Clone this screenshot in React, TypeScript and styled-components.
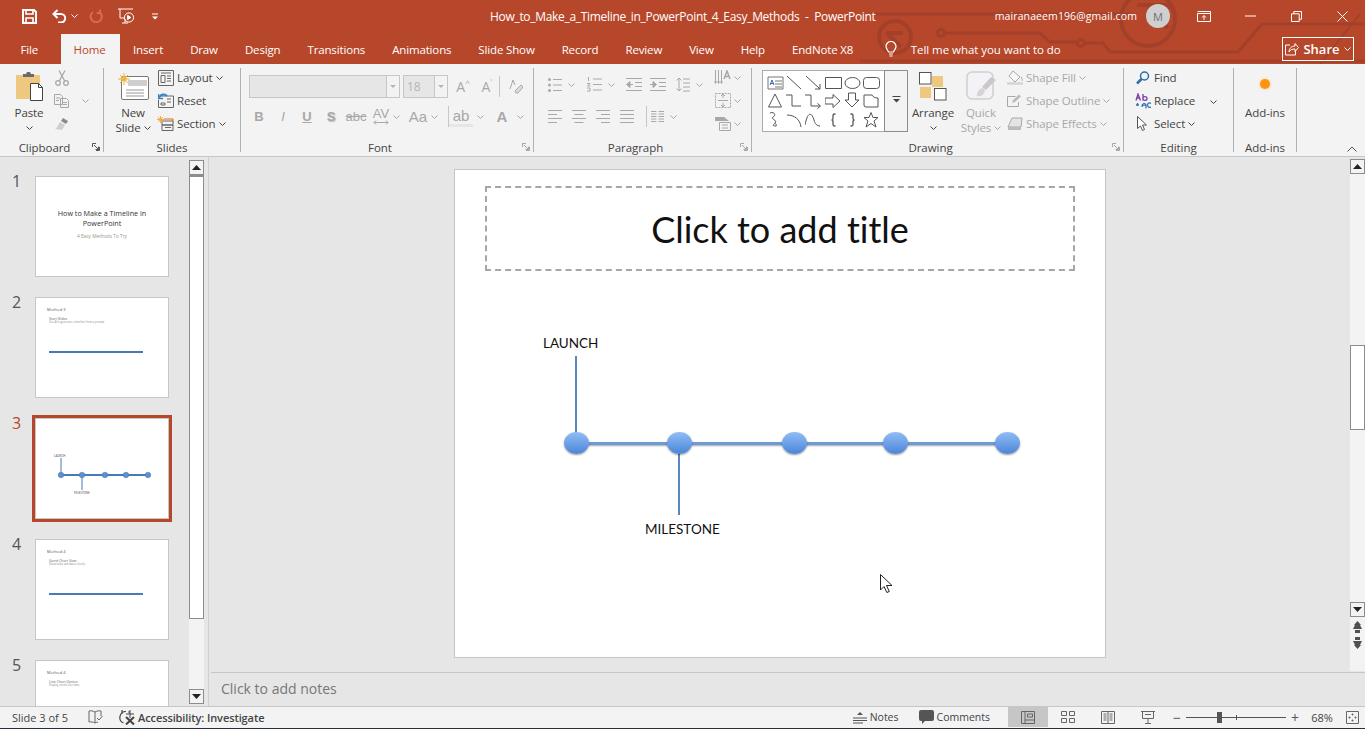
import React from 'react';
import styled, { createGlobalStyle } from 'styled-components';

const RED = '#b7472a';
const LINE = '#a3402a';
const PANEL = '#e6e6e6';
const RIBBON = '#f3f3f3';
const INK = '#444';
const OFF = '#a8a8a8';
const UI_FONT = '"Open Sans", "Noto Sans", sans-serif';
const SLIDE_FONT = 'Lato, "Open Sans", sans-serif';

const GlobalStyle = createGlobalStyle`
    html, body { margin: 0; padding: 0; background: ${PANEL}; overflow: hidden; }
    body { font-family: ${UI_FONT}; font-size: 12px; color: ${INK}; }
    * { box-sizing: border-box; }
`;

interface SvgProps {
    readonly w: number;
    readonly h: number;
    readonly c?: string;
    readonly sw?: number;
    readonly children: React.ReactNode;
}

const Svg = ({ w, h, c = INK, sw = 1, children }: SvgProps) => (
    <svg width={w} height={h} viewBox={`0 0 ${w} ${h}`} fill="none" stroke={c} strokeWidth={sw} style={{ display: 'block', flex: 'none' }}>
        {children}
    </svg>
);

const Chevron = ({ c = INK }: { readonly c?: string }) => (
    <Svg w={7} h={4} c={c}><path d="M.5.5 3.5 3.5 6.5.5" /></Svg>
);

// ---- drawn icons ----
const SaveIcon = () => (
    <Svg w={15} h={15} c="#fff" sw={2}>
        <path d="M1 1h11l2 2v11H1z" />
        <path d="M4 1v4h7V1M4 14V9h7v5" strokeWidth={1.6} />
    </Svg>
);
const UndoIcon = () => (
    <Svg w={15} h={14} c="#fff" sw={2}><path d="M5.5 1 1.500 5l4 4M2 5h7a4.200 4.200 0 0 1 0 8.400H6" /></Svg>
);
const RedoIcon = () => (
    <Svg w={14} h={14} c="#dc6a4c" sw={2}><path d="M4 3a5.600 5.600 0 1 0 7 .4M11 .6V4H7.600" /></Svg>
);
const PresentIcon = () => (
    <Svg w={17} h={16} c="#fff">
        <path d="M0 1h15M2 1v9h5M4 15h6M7 11v4" />
        <circle cx="11" cy="9.5" r="4.600" />
        <path d="M9.600 7.400l3.200 2.100-3.200 2.100z" fill="#fff" />
    </Svg>
);
const CustomizeIcon = () => (
    <Svg w={6} h={7} c="#fff"><path d="M0 1h6" /><path d="M0 3.500h6L3 6.500z" fill="#fff" stroke="none" /></Svg>
);
const DisplayIcon = () => (
    <Svg w={14} h={11} c="#fff"><path d="M.5 2.500h13v8H.5zM.5.5h13v2M7 9V4.600M5 6.500l2-2 2 2" /></Svg>
);
const MinIcon = () => <Svg w={11} h={2} c="#fff"><path d="M0 1h11" /></Svg>;
const RestoreIcon = () => (
    <Svg w={11} h={11} c="#fff"><path d="M.5 2.800h7.700v7.700H.5zM2.800 2.800V.5h7.700v7.700H8.200" /></Svg>
);
const CloseIcon = () => <Svg w={11} h={11} c="#fff"><path d="M.5.5l10 10M10.500.5l-10 10" /></Svg>;
const ShareIcon = () => (
    <Svg w={14} h={14} c="#fff"><path d="M5 3H.5v10h10V9M4 10c0-4 3-6 6-6V1.500l3.500 4-3.500 4V7c-3 0-5 1-6 3z" /></Svg>
);
const BulbIcon = () => (
    <Svg w={12} h={16} c="#fff" sw={1.2}>
        <path d="M3.500 11C3 9 1 8 1 5.500a5 5 0 0 1 10 0C11 8 9 9 8.500 11zM4 13h4M4.500 15h3" />
    </Svg>
);
const PasteIcon = () => (
    <Svg w={29} h={31} c="#666">
        <path d="M1 4h24v24H1z" fill="#edc87e" stroke="none" />
        <path d="M8 3h3l1-2h3l1 2h3v3H8z" fill="#6b6b6b" stroke="none" />
        <path d="M15.500 12.500h8l4 4v13h-12z" fill="#fff" stroke="#444" />
        <path d="M23.500 12.500v4h4" stroke="#444" />
    </Svg>
);
const ScissorsIcon = () => (
    <Svg w={14} h={16} c={OFF} sw={1.3}>
        <circle cx="3" cy="13" r="2.300" /><circle cx="11" cy="13" r="2.300" />
        <path d="M4.300 11 10 .5M9.700 11 4 .5" />
    </Svg>
);
const CopyIcon = () => (
    <Svg w={15} h={14} c={OFF}><path d="M.5.5h6l2 2v8h-8zM6.500 4.500h6l2 2v7h-8zM2 4h4M2 6.500h3M8.500 8.500h4.500M8.500 10.500h4.500" /></Svg>
);
const PainterIcon = () => (
    <Svg w={16} h={14} c={OFF}>
        <path d="M9 1l5 3-2 3-5-3z" fill="#8b8b8b" stroke="none" />
        <path d="M6 5l5 3-3 5-7-1c2-1 3-4 5-7z" fill="#cfcfcf" stroke="none" />
    </Svg>
);
const LauncherIcon = ({ c = '#666' }: { readonly c?: string }) => (
    <Svg w={8} h={8} c={c}><path d="M.5 4V.5H4M7.500 4v3.500H4M2 2l4.500 4.500M6.500 3.500v3h-3" /></Svg>
);
const NewSlideIcon = () => (
    <Svg w={31} h={27} c="#777">
        <rect x="3.500" y="3.500" width="27" height="23" rx="1.500" fill="#fff" />
        <path d="M10 7h19v6H10z" fill="#cfcfcf" stroke="none" />
        <path d="M8 17h18M8 20h18M8 23h18" stroke="#999" />
        <circle cx="6" cy="6" r="2.800" fill="#f5c66e" stroke="none" />
        <path d="M6 0v12M0 6h12M2 2l8 8M10 2l-8 8" stroke="#f0b040" />
    </Svg>
);
const LayoutIcon = () => (
    <Svg w={16} h={16} c="#666"><path d="M.5.5h15v15H.5zM3 3h10M3 5.500h4v7H3zM9 6h4M9 8.500h4M9 11h4" /></Svg>
);
const ResetIcon = () => (
    <Svg w={16} h={15} c="#666">
        <path d="M3 3h12.500v11.500H.5V7M3 10h4v2H3zM9 6h4M9 9h4" />
        <path d="M1 4.500C3 1 7 .5 9 3" stroke="#3f7fc4" strokeWidth={2} />
        <path d="M.5 1v4.500H5" stroke="#3f7fc4" strokeWidth={1.5} />
    </Svg>
);
const SectionIcon = () => (
    <Svg w={17} h={15} c="#666">
        <path d="M5 5h11v4H5zM5 9h11v5.500H5zM8 11.500h6" />
        <path d="M3.500 0v7M0 3.500h7M1 1l5 5M6 1 1 6" stroke="#f0b040" />
        <path d="M7 3h9v3" stroke="#d9691e" />
    </Svg>
);
const ClearFormatIcon = () => (
    <Svg w={15} h={15} c={OFF}>
        <path d="M2 10 5 1l2 5" />
        <path d="M7 12 13 6l2 2-5 6H8z" fill="#ddd" />
    </Svg>
);
const SpacingArrow = () => (
    <Svg w={16} h={5} c={OFF}><path d="M1 2.500h14M3 .5l-2 2 2 2M13 .5l2 2-2 2" /></Svg>
);
const BulletsIcon = () => (
    <Svg w={14} h={14} c={OFF}>
        <circle cx="1.500" cy="1.500" r="1.500" fill={OFF} stroke="none" /><circle cx="1.500" cy="7" r="1.500" fill={OFF} stroke="none" /><circle cx="1.500" cy="12.500" r="1.500" fill={OFF} stroke="none" />
        <path d="M5 1.500h9M5 7h9M5 12.500h9" />
    </Svg>
);
const NumberingIcon = () => (
    <Svg w={15} h={15} c={OFF}>
        <path d="M1.500 0v4M0 6.500h3L.5 9h3M0 11h3v3H0" />
        <path d="M6 2h9M6 7.500h9M6 13h9" />
    </Svg>
);
const IndentIcon = ({ flip }: { readonly flip?: boolean }) => (
    <Svg w={16} h={13} c={OFF}>
        <path d="M0 .5h16M9 4.500h7M9 8.500h7M0 12.500h16" />
        <path d={flip ? 'M0 6.500h5M3 3.500 6.500 6.500 3 9.500z' : 'M7 6.500H2M4 3.500.5 6.500 4 9.500z'} fill={OFF} />
    </Svg>
);
const LineSpacingIcon = () => (
    <Svg w={14} h={15} c={OFF}><path d="M3 1v13M.5 3.500 3 1l2.500 2.500M.5 11.500 3 14l2.500-2.500M7 2h7M7 6h7M7 10h7M7 14h7" /></Svg>
);
const AlignIcon = ({ kind }: { readonly kind: 'l' | 'c' | 'r' | 'j' }) => {
    const short = { l: 'M0 4.500h9M0 12.500h9', c: 'M2.500 4.500h9M2.500 12.500h9', r: 'M5 4.500h9M5 12.500h9', j: 'M0 4.500h14M0 12.500h14' }[kind];
    return <Svg w={14} h={13} c={OFF}><path d="M0 .5h14M0 8.500h14" /><path d={short} /></Svg>;
};
const ColumnsIcon = () => (
    <Svg w={13} h={11} c={OFF}><path d="M0 .5h5.500M7.500.5H13M0 5.500h5.500M7.500 5.500H13M0 10.500h5.500M7.500 10.500H13M0 3h5.500M7.500 3H13M0 8h5.500M7.500 8H13" /></Svg>
);
const TextDirIcon = () => (
    <Svg w={17} h={16} c={OFF}>
        <path d="M1.500 0v13M4.500 0v13M.5 11.500l1 2 1-2M3.500 11.500l1 2 1-2M7.500 0v13M6.500 11.500l1 2 1-2" />
        <path d="M10 9l3-8 3 8M11 6.500h4" strokeWidth={1.5} />
    </Svg>
);
const AlignTextIcon = () => (
    <Svg w={16} h={15} c={OFF}>
        <path d="M.5.5h15v14H.5z" strokeDasharray="2 1" />
        <path d="M3 7.500h10M8 1v4M6 3l2-2 2 2M8 14v-4M6 12l2 2 2-2" />
    </Svg>
);
const SmartArtIcon = () => (
    <Svg w={16} h={15} c={OFF}>
        <path d="M0 1h9l5 4H0z" fill={OFF} stroke="none" />
        <path d="M4.500 6.500h11v8h-11z" fill="#f3f3f3" />
        <path d="M7 9h6M7 12h6" />
    </Svg>
);
const ArrangeIcon = () => (
    <Svg w={28} h={29} c="#555">
        <rect x="13" y="4" width="11" height="11" fill="#edc87e" stroke="none" />
        <rect x="1" y="15" width="11" height="11" fill="#edc87e" stroke="none" />
        <rect x=".5" y=".5" width="11.500" height="11.500" fill="#fff" />
        <rect x="15.500" y="16.500" width="11.500" height="11.500" fill="#fff" />
    </Svg>
);
const QuickStylesIcon = () => (
    <Svg w={31} h={30} c="#cfcfcf" sw={1.5}>
        <rect x="1" y="1" width="26" height="27" rx="5" fill="#f5f2f7" />
        <path d="M30 9 20 19l-4-3 9-10z" fill="#c9c9c9" stroke="none" />
        <path d="M17 17c-3 0-5 2-6 6-.5 1.500 0 2.500 1.500 2.500 3 0 6-3 6.500-6z" fill="#d5d5d5" stroke="none" />
    </Svg>
);
const ShapeFillIcon = () => (
    <Svg w={16} h={15} c={OFF}>
        <path d="M6 1l7 6-5 5-6-6z" fill="#f7f7f7" /><path d="M0 13.500h16" stroke="#d5d5d5" strokeWidth={2.5} />
        <path d="M14 7c1 2 2 3 1 4" />
    </Svg>
);
const ShapeOutlineIcon = () => (
    <Svg w={16} h={13} c={OFF}><path d="M.5 2.500h8M.5 2.500v10h11V8" /><path d="M5 9l1-3 6-5.500 2 2L8 8z" fill="#bbb" stroke="none" /></Svg>
);
const ShapeEffectsIcon = () => (
    <Svg w={16} h={14} c={OFF}>
        <path d="M5 1h10l-1 9H1z" fill="#e4e4e4" /><path d="M1 10h13v3H1z" fill="#bbb" stroke="none" />
    </Svg>
);
const FindIcon = () => (
    <Svg w={14} h={14} c="#2e6db0" sw={1.5}><circle cx="8.500" cy="5" r="4" /><path d="M5.500 8 1 12.500" strokeWidth={2.5} /></Svg>
);
const ReplaceIcon = () => (
    <Svg w={16} h={16} c="#2e6db0">
        <path d="M1 7.500 3 1l2.500 6.500M1.800 5h3" stroke="#7b3fa8" strokeWidth={1.3} />
        <path d="M8 1v6.500M8 5.500c0-2.500 4-2.500 4 0s-4 2.500-4 0z" stroke="#7b3fa8" strokeWidth={1.3} />
        <path d="M1 12h3M2.500 10v2" strokeWidth={1.3} />
        <path d="M7 13c0-3 4-3 4-1v3.500M7 14c0-2 4-2 4-2M16 10.500c-3-1.500-4 .5-3 3 .4 1 2 1 3 .5" strokeWidth={1.2} />
    </Svg>
);
const SelectIcon = () => (
    <Svg w={11} h={15} c="#555"><path d="M.5.500v12l3-2.500 2 4.500 2-1-2-4.500h4z" fill="#fff" /></Svg>
);
const CollapseIcon = () => <Svg w={10} h={6} c="#555"><path d="M.5 5.500 5 1l4.500 4.500" /></Svg>;
const ProofIcon = () => (
    <Svg w={15} h={14} c="#666"><path d="M1 1c2-.5 4 0 6 1v11c-2-1-4-1.500-6-1zM7 2c2-1 4-1.500 6-1v5M7 13c1-.5 2-.8 3-1M9 8l2 2 3.500-4" /></Svg>
);
const AccessIcon = () => (
    <Svg w={17} h={16} c="#444" sw={1.2}>
        <path d="M7 2.500A6 6 0 0 0 4.500 14M3 1v4M9 3h2" />
        <path d="M7 8l8 7.500M15 8l-8 7.500" strokeWidth={2} />
        <path d="M11 1v8M7 5h8" strokeWidth={1} />
    </Svg>
);
const NotesIcon = () => (
    <Svg w={14} h={13} c="#555"><path d="M0 7h14M0 9.500h14M0 12h10" /><path d="M7 1l3 3H4z" fill="#555" stroke="none" /></Svg>
);
const CommentIcon = () => (
    <Svg w={15} h={14} c="#555">
        <path d="M2 0h11a2 2 0 0 1 2 2v7a2 2 0 0 1-2 2H6l-3 3v-3H2a2 2 0 0 1-2-2V2a2 2 0 0 1 2-2z" fill="#555" stroke="none" />
    </Svg>
);
const NormalViewIcon = () => (
    <Svg w={14} h={13} c="#666"><path d="M.5.5h13v12H.5zM4 .5v12M4 9h9.500M6.500 3h5v3h-5z" /></Svg>
);
const SorterIcon = () => (
    <Svg w={14} h={12} c="#666"><path d="M.5.5h5v4h-5zM8.500.5h5v4h-5zM.5 7.500h5v4h-5zM8.500 7.500h5v4h-5z" /></Svg>
);
const ReadingIcon = () => (
    <Svg w={14} h={13} c="#666"><path d="M.5.5h13v12H.5zM7 .5v12M2.500 3h3M2.500 5h3M2.500 7h3M2.500 9h3M8.500 3h3M8.500 5h3M8.500 7h3M8.500 9h3" /></Svg>
);
const ShowIcon = () => (
    <Svg w={14} h={13} c="#666"><path d="M0 .5h14M1.500 .5v7h11v-7M7 7.500v5M4 12.500h6M4 3.500h6" /></Svg>
);
const FitIcon = () => (
    <Svg w={13} h={13} c="#666"><path d="M.5.5h12v12H.5zM6.500 2.500v2M5.500 3.500h2M6.500 8.500v2M5.500 9.500h2M2.500 6.500h2M3.500 5.500v2M8.500 6.500h2M9.500 5.500v2" /></Svg>
);
const PrevNextIcon = ({ down }: { readonly down?: boolean }) => (
    <svg width={9} height={12} viewBox="0 0 9 12" fill="#505050" style={{ display: 'block', transform: down ? 'scaleY(-1)' : undefined }}>
        <path d="M4.500 0 8 4H7l2 4H0l2-4H1zM2 9h5v3H2z" />
    </svg>
);
const Pointer = () => (
    <svg width={13} height={20} viewBox="0 0 13 20" fill="#fff" stroke="#222" style={{ display: 'block' }}>
        <path d="M.5.500v15.500l3.500-3.500 2.800 6 2.500-1-2.800-6H12z" />
    </svg>
);

// ---- shape gallery ----
const SHAPES: ReadonlyArray<React.ReactNode> = [
    <g key="box"><path d="M1 3h15v12H1z" /><path d="M8 7h7M8 10h7M8 13h7" /><path d="M3 11l2-5 2 5M3.800 9.500h2.400" stroke="#2e6db0" /></g>,
    <path key="line" d="M1 2l14 13" />,
    <path key="arrow" d="M1 2l14 13M15 10v5h-5" />,
    <path key="rect" d="M.5 3.500h16v11H.5z" />,
    <ellipse key="ell" cx="8.500" cy="9" rx="7.500" ry="5.500" />,
    <rect key="rr" x=".5" y="3.500" width="16" height="11" rx="3" />,
    <path key="tri" d="M8 2l6.500 13H1.500z" />,
    <path key="el" d="M0 3h6v11h9" />,
    <path key="ela" d="M0 3h6v11h9M12.500 11.500l3 2.500-3 2.500" />,
    <path key="ra" d="M0 6h8V2.500l7 6.500-7 6.500V12H0z" />,
    <path key="da" d="M4.500 1h7v7h3.500L8 15 1 8h3.500z" />,
    <path key="snip" d="M1 3h8c1 2 3 3 6 3v9H3a2 2 0 0 1-2-2z" />,
    <path key="free" d="M3 2c5-2 6 3 3 4-3 2 5 3 2 6-2 2-3 3 1 3 1 0 0-3-1-2" />,
    <path key="arc" d="M1 4c7 0 13 4 14 12" />,
    <path key="curve" d="M0 14c3-15 7-12 9-5 1 4 3 6 6 6" />,
    <path key="ob" d="M10.500 3H9.500Q8 3 8 4.500V7.500Q8 9 6.500 9 8 9 8 10.500V13.500Q8 15 9.500 15H10.500" strokeWidth={1.3} />,
    <path key="cb" d="M6.500 3H7.500Q9 3 9 4.500V7.500Q9 9 10.500 9 9 9 9 10.500V13.500Q9 15 7.500 15H6.500" strokeWidth={1.3} />,
    <path key="star" d="M8 1.500l2 5h5l-4 3.500 2 6-5-3.500-5 3.500 2-6-4-3.500h5z" />
];

// ---- page ----
const TABS = ['Insert', 'Draw', 'Design', 'Transitions', 'Animations', 'Slide Show', 'Record', 'Review', 'View', 'Help', 'EndNote X8'];

const CircuitArt = () => (
    <Circuit width={1365} height={64} viewBox="0 0 1365 64" fill="none" stroke={LINE} strokeWidth={3}>
        <path d="M870 14h262" />
        <circle cx="895" cy="37" r="16" strokeWidth={4} />
        <path d="M886 33h17M887 33l14 14" strokeWidth={4} />
        <circle cx="941" cy="33" r="3.500" />
        <path d="M945 33h95l10 9h27" />
        <circle cx="1081" cy="43" r="3.500" />
        <path d="M1085 43h18l7 9h128l24-28h103" />
        <path d="M860 61h505" />
        <path d="M1320 64l40-50" strokeWidth={2} />
        <circle cx="1148" cy="19" r="27" strokeWidth={4} />
        <path d="M1137 5h33v4M1148 8l20 20" strokeWidth={4} />
    </Circuit>
);

interface ToolProps {
    readonly icon: React.ReactNode;
    readonly label: string;
    readonly off?: boolean;
    readonly chevron?: boolean;
}

const Tool = ({ icon, label, off, chevron }: ToolProps) => (
    <ToolRow $off={off}>
        <ToolIcon>{icon}</ToolIcon>
        <span>{label}</span>
        {chevron && <Chevron c={off ? OFF : INK} />}
    </ToolRow>
);

interface GroupProps {
    readonly w: number;
    readonly label: string;
    readonly launcher?: boolean;
    readonly children: React.ReactNode;
}

const RibbonGroup = ({ w, label, launcher, children }: GroupProps) => (
    <Group $w={w}>
        <GroupBody>{children}</GroupBody>
        <GroupLabel $launcher={launcher}>
            {label}
            {launcher && <LauncherSpot><LauncherIcon c={label === 'Clipboard' ? '#555' : OFF} /></LauncherSpot>}
        </GroupLabel>
    </Group>
);

const Ribbon = () => (
    <RibbonBar>
        <RibbonGroup w={103} label="Clipboard" launcher>
            <LargeButton $w={42} $ml={8}>
                <LargeIcon><PasteIcon /></LargeIcon>
                <LargeText>Paste</LargeText>
                <ChevronLine><Chevron /></ChevronLine>
            </LargeButton>
            <ToolColumn $ml={3}>
                <ToolRow><ToolIcon><ScissorsIcon /></ToolIcon></ToolRow>
                <ToolRow><ToolIcon><CopyIcon /></ToolIcon><CopyChevron><Chevron c={OFF} /></CopyChevron></ToolRow>
                <ToolRow><ToolIcon><PainterIcon /></ToolIcon></ToolRow>
            </ToolColumn>
        </RibbonGroup>
        <GroupRule />
        <RibbonGroup w={136} label="Slides">
            <LargeButton $w={42} $ml={8}>
                <LargeIcon><NewSlideIcon /></LargeIcon>
                <LargeText>New</LargeText>
                <LargeText>Slide <Chevron /></LargeText>
            </LargeButton>
            <ToolColumn $ml={3}>
                <Tool icon={<LayoutIcon />} label="Layout" chevron />
                <Tool icon={<ResetIcon />} label="Reset" />
                <Tool icon={<SectionIcon />} label="Section" chevron />
            </ToolColumn>
        </RibbonGroup>
        <GroupRule />
        <RibbonGroup w={292} label="Font" launcher>
            <FontBody>
                <FontRow>
                    <Combo $w={151}><ComboArrow /></Combo>
                    <Combo $w={45}>18<ComboArrow /></Combo>
                    <GrowGlyph>A<sup>^</sup></GrowGlyph>
                    <GrowGlyph>A<sup>˅</sup></GrowGlyph>
                    <SmallRule $ml={0} $mr={0} />
                    <ClearSpot><ClearFormatIcon /></ClearSpot>
                </FontRow>
                <FontRow>
                    <FormatGlyph $w={24} $ml={-2} $bold>B</FormatGlyph>
                    <FormatGlyph $w={24} $italic>I</FormatGlyph>
                    <FormatGlyph $w={24} $under $bold>U</FormatGlyph>
                    <FormatGlyph $w={24} $bold $shadow>S</FormatGlyph>
                    <FormatGlyph $w={26} $strike>abc</FormatGlyph>
                    <SpacingGlyph>AV<SpacingArrow /></SpacingGlyph>
                    <Chevron c={OFF} />
                    <FormatGlyph $w={26} $ml={5} $big>Aa</FormatGlyph>
                    <Chevron c={OFF} />
                    <SmallRule $ml={10} $mr={0} />
                    <FormatGlyph $w={24} $big $mark $mr={4}>ab</FormatGlyph>
                    <Chevron c={OFF} />
                    <FormatGlyph $w={24} $ml={6} $mr={3} $big $bold>A</FormatGlyph>
                    <Chevron c={OFF} />
                </FontRow>
            </FontBody>
        </RibbonGroup>
        <GroupRule />
        <RibbonGroup w={217} label="Paragraph" launcher>
            <ParaBody>
                <FontRow>
                    <ParaItem $w={39}><BulletsIcon /><Chevron c={OFF} /></ParaItem>
                    <ParaItem $w={39}><NumberingIcon /><Chevron c={OFF} /></ParaItem>
                    <ParaItem $w={24}><IndentIcon /></ParaItem>
                    <ParaItem $w={26}><IndentIcon flip /></ParaItem>
                    <ParaItem $w={30}><LineSpacingIcon /><Chevron c={OFF} /></ParaItem>
                </FontRow>
                <FontRow>
                    <ParaItem $w={24}><AlignIcon kind="l" /></ParaItem>
                    <ParaItem $w={24}><AlignIcon kind="c" /></ParaItem>
                    <ParaItem $w={24}><AlignIcon kind="r" /></ParaItem>
                    <ParaItem $w={22}><AlignIcon kind="j" /></ParaItem>
                    <SmallRule $ml={4} $mr={4} />
                    <ParaItem $w={36}><ColumnsIcon /><Chevron c={OFF} /></ParaItem>
                </FontRow>
            </ParaBody>
            <ToolColumn $ml={10}>
                <ToolRow><ToolIcon><TextDirIcon /></ToolIcon><Chevron c={OFF} /></ToolRow>
                <ToolRow><ToolIcon><AlignTextIcon /></ToolIcon><Chevron c={OFF} /></ToolRow>
                <ToolRow><ToolIcon><SmartArtIcon /></ToolIcon><Chevron c={OFF} /></ToolRow>
            </ToolColumn>
        </RibbonGroup>
        <GroupRule />
        <RibbonGroup w={371} label="Drawing" launcher>
            <Gallery>
                {SHAPES.map((shape, i) => <Svg key={i} w={17} h={17} c={i === 0 ? '#777' : '#555'}>{shape}</Svg>)}
            </Gallery>
            <GalleryMore><Svg w={9} h={7} c="#444"><path d="M.5.500h8" /><path d="M1 3h7L4.500 6.500z" fill="#444" stroke="none" /></Svg></GalleryMore>
            <LargeButton $w={48} $ml={1}>
                <LargeIcon><ArrangeIcon /></LargeIcon>
                <LargeText>Arrange</LargeText>
                <ChevronLine><Chevron /></ChevronLine>
            </LargeButton>
            <LargeButton $w={46} $ml={1} $off>
                <LargeIcon><QuickStylesIcon /></LargeIcon>
                <LargeText>Quick</LargeText>
                <LargeText>Styles <Chevron c={OFF} /></LargeText>
            </LargeButton>
            <ToolColumn $ml={2}>
                <Tool icon={<ShapeFillIcon />} label="Shape Fill" off chevron />
                <Tool icon={<ShapeOutlineIcon />} label="Shape Outline" off chevron />
                <Tool icon={<ShapeEffectsIcon />} label="Shape Effects" off chevron />
            </ToolColumn>
        </RibbonGroup>
        <GroupRule />
        <RibbonGroup w={109} label="Editing">
            <ToolColumn $ml={10}>
                <Tool icon={<FindIcon />} label="Find" />
                <Tool icon={<ReplaceIcon />} label="Replace" />
                <Tool icon={<SelectIcon />} label="Select" chevron />
            </ToolColumn>
            <ReplaceChevron><Chevron /></ReplaceChevron>
        </RibbonGroup>
        <GroupRule />
        <RibbonGroup w={62} label="Add-ins">
            <LargeButton $w={62} $ml={0}>
                <LargeIcon><AddInDot /></LargeIcon>
                <LargeText>Add-ins</LargeText>
            </LargeButton>
        </RibbonGroup>
        <GroupRule />
        <CollapseSpot><CollapseIcon /></CollapseSpot>
    </RibbonBar>
);

interface ThumbLine {
    readonly heading: string;
    readonly title: string;
    readonly text: string;
}

const ListSlide = ({ heading, title, text }: ThumbLine) => (
    <ThumbContent>
        <ThumbHeading>{heading}</ThumbHeading>
        <ThumbTitle>{title}</ThumbTitle>
        <ThumbText>{text}</ThumbText>
        <ThumbBar />
    </ThumbContent>
);

const MiniTimeline = () => (
    <svg width={132} height={99} viewBox="0 0 132 99" style={{ display: 'block' }}>
        <text x="18" y="37.5" fontSize="2.8" fill="#555" fontFamily="Lato">LAUNCH</text>
        <text x="38" y="75" fontSize="2.8" fill="#555" fontFamily="Lato">MILESTONE</text>
        <path d="M25 39v17M46 56v15" stroke="#4a7ab5" strokeWidth={1} />
        <path d="M25 56h87" stroke="#4a7ab5" strokeWidth={2} />
        {[25, 46, 69, 90, 112].map(x => <circle key={x} cx={x} cy={56} r={2.8} fill="#5b8fd6" stroke="#4a7ab5" strokeWidth={.5} />)}
    </svg>
);

const Thumbnails = () => (
    <ThumbPanel>
        <ThumbRow>
            <ThumbNumber>1</ThumbNumber>
            <ThumbCard>
                <CoverSlide>
                    <CoverTitle>How to Make a Timeline in PowerPoint</CoverTitle>
                    <CoverSub>4 Easy Methods To Try</CoverSub>
                </CoverSlide>
            </ThumbCard>
        </ThumbRow>
        <ThumbRow>
            <ThumbNumber>2</ThumbNumber>
            <ThumbCard><ListSlide heading="Method 3" title="Start Slides" text="Use AI to generate a timeline from a prompt" /></ThumbCard>
        </ThumbRow>
        <ThumbRow>
            <ThumbNumber $active>3</ThumbNumber>
            <ThumbCard $active><MiniTimeline /></ThumbCard>
        </ThumbRow>
        <ThumbRow>
            <ThumbNumber>4</ThumbNumber>
            <ThumbCard><ListSlide heading="Method 4" title="Gantt Chart View" text="Show tasks and dates clearly" /></ThumbCard>
        </ThumbRow>
        <ThumbRow>
            <ThumbNumber>5</ThumbNumber>
            <ThumbCard><ListSlide heading="Method 4" title="Line Chart Option" text="Display events over time" /></ThumbCard>
        </ThumbRow>
    </ThumbPanel>
);

const ScrollArrow = ({ up }: { readonly up?: boolean }) => (
    <ScrollButton>
        <svg width={9} height={5} viewBox="0 0 9 5" fill="#222" style={{ transform: up ? undefined : 'scaleY(-1)' }}>
            <path d="M4.500 0 9 5H0z" />
        </svg>
    </ScrollButton>
);

const NODES = [122, 225, 340, 441, 553];

const SlideCanvas = () => (
    <Slide>
        <TitleBox>Click to add title</TitleBox>
        <SlideLabel $x={89} $y={166}>LAUNCH</SlideLabel>
        <SlideLabel $x={191} $y={352}>MILESTONE</SlideLabel>
        <Stem $x={121} $top={187} $h={78} />
        <Stem $x={224} $top={285} $h={61} />
        <Spine />
        {NODES.map(x => <Node key={x} $x={x} />)}
        <PointerSpot><Pointer /></PointerSpot>
    </Slide>
);

const StatusBar = () => (
    <Status>
        <SlideCount>Slide 3 of 5</SlideCount>
        <ProofSpot><ProofIcon /></ProofSpot>
        <AccessSpot><AccessIcon /></AccessSpot>
        <AccessText>Accessibility: Investigate</AccessText>
        <StatusRight>
            <StatusTool $mr={20}><NotesIcon />Notes</StatusTool>
            <StatusTool $mr={18}><CommentIcon />Comments</StatusTool>
            <ViewButton $active><NormalViewIcon /></ViewButton>
            <ViewButton><SorterIcon /></ViewButton>
            <ViewButton><ReadingIcon /></ViewButton>
            <ViewButton><ShowIcon /></ViewButton>
            <ZoomSign>−</ZoomSign>
            <ZoomTrack><ZoomTick /><ZoomThumb /></ZoomTrack>
            <ZoomSign>+</ZoomSign>
            <ZoomValue>68%</ZoomValue>
            <FitIcon />
        </StatusRight>
    </Status>
);

const App = () => (
    <Page>
        <GlobalStyle />
        <Header>
            <CircuitArt />
            <TitleRow>
                <QuickAccess>
                    <QuickItem $ml={0}><SaveIcon /></QuickItem>
                    <QuickItem $ml={15}><UndoIcon /></QuickItem>
                    <QuickItem $ml={4}><Chevron c="#fff" /></QuickItem>
                    <QuickItem $ml={11}><RedoIcon /></QuickItem>
                    <QuickItem $ml={15}><PresentIcon /></QuickItem>
                    <QuickItem $ml={17}><CustomizeIcon /></QuickItem>
                </QuickAccess>
                <DocTitle>How_to_Make_a_Timeline_in_PowerPoint_4_Easy_Methods&nbsp; - &nbsp;PowerPoint</DocTitle>
                <Account>mairanaeem196@gmail.com</Account>
                <Avatar>M</Avatar>
                <WindowButton $ml={11}><DisplayIcon /></WindowButton>
                <WindowButton $ml={0}><MinIcon /></WindowButton>
                <WindowButton $ml={0}><RestoreIcon /></WindowButton>
                <WindowButton $ml={0}><CloseIcon /></WindowButton>
            </TitleRow>
            <TabRow>
                <FileTab>File</FileTab>
                <HomeTab>Home</HomeTab>
                {TABS.map(tab => <Tab key={tab}>{tab}</Tab>)}
                <TellMe><BulbIcon />Tell me what you want to do</TellMe>
                <ShareButton><ShareIcon />Share<Chevron c="#fff" /></ShareButton>
            </TabRow>
        </Header>
        <Ribbon />
        <Main>
            <Thumbnails />
            <LeftScroll>
                <ScrollArrow up />
                <LeftThumb />
                <ScrollArrow />
            </LeftScroll>
            <Editor>
                <EditorTop>
                    <Canvas><SlideCanvas /></Canvas>
                    <RightScroll>
                        <ScrollArrow up />
                        <RightThumb />
                        <ScrollArrow />
                        <SlideNav><PrevNextIcon /><PrevNextIcon down /></SlideNav>
                    </RightScroll>
                </EditorTop>
                <NotesBar>Click to add notes</NotesBar>
            </Editor>
        </Main>
        <StatusBar />
    </Page>
);

const Page = styled.div`
    width: 1365px;
    height: 729px;
    display: flex;
    flex-direction: column;
    overflow: hidden;
`;

const Header = styled.header`
    position: relative;
    height: 64px;
    background: ${RED};
    color: #fff;
    flex: none;
`;

const Circuit = styled.svg`
    position: absolute;
    left: 0;
    top: 0;
`;

const TitleRow = styled.div`
    position: relative;
    height: 32px;
    display: flex;
    align-items: center;
`;

const QuickAccess = styled.div`
    width: 490px;
    padding-left: 22px;
    display: flex;
    align-items: center;
    flex: none;
`;

const QuickItem = styled.div<{ $ml: number }>`
    margin-left: ${({ $ml }) => $ml}px;
    flex: none;
`;

const DocTitle = styled.div`
    width: 400px;
    white-space: nowrap;
    font-size: 12px;
    letter-spacing: -.31px;
`;

const Account = styled.div`
    margin-left: auto;
    font-size: 10.5px;
    letter-spacing: .1px;
    white-space: nowrap;
`;

const Avatar = styled.div`
    width: 24px;
    height: 24px;
    margin-left: 9px;
    border-radius: 50%;
    background: #cfcfcf;
    color: #6a7280;
    font-size: 11px;
    display: flex;
    align-items: center;
    justify-content: center;
    flex: none;
`;

const WindowButton = styled.div<{ $ml: number }>`
    width: 46px;
    margin-left: ${({ $ml }) => $ml}px;
    display: flex;
    justify-content: center;
    flex: none;
`;

const TabRow = styled.nav`
    position: relative;
    height: 32px;
    display: flex;
    align-items: stretch;
    padding-left: 7px;
    font-size: 11.5px;
`;

const Tab = styled.div`
    padding: 3px 13.5px 0;
    display: flex;
    align-items: center;
    white-space: nowrap;
    letter-spacing: -.15px;
`;

const FileTab = styled(Tab)`
    margin-right: 9px;
`;

const HomeTab = styled(Tab)`
    margin-top: 2px;
    padding: 1px 14px 0 13px;
    background: ${RIBBON};
    color: ${RED};
`;

const TellMe = styled.div`
    margin-left: 18px;
    padding-top: 2px;
    display: flex;
    align-items: center;
    gap: 14px;
    letter-spacing: -.05px;
    white-space: nowrap;
`;

const ShareButton = styled.div`
    position: absolute;
    left: 1282px;
    top: 5px;
    width: 72px;
    height: 24px;
    border: 1px solid #fff;
    display: flex;
    align-items: center;
    justify-content: center;
    gap: 4px;
    font-size: 13px;
    font-weight: 600;
`;

const RibbonBar = styled.div`
    height: 93px;
    padding-top: 3px;
    display: flex;
    background: ${RIBBON};
    border-bottom: 1px solid #c6c6c6;
    font-size: 11.5px;
    flex: none;
`;

const Group = styled.section<{ $w: number }>`
    width: ${({ $w }) => $w}px;
    height: 89px;
    display: flex;
    flex-direction: column;
    flex: none;
`;

const GroupBody = styled.div`
    height: 73px;
    display: flex;
`;

const GroupLabel = styled.div<{ $launcher?: boolean }>`
    position: relative;
    height: 16px;
    line-height: 16px;
    text-align: center;
    padding-right: ${({ $launcher }) => ($launcher ? 14 : 0)}px;
    letter-spacing: -.05px;
`;

const LauncherSpot = styled.span`
    position: absolute;
    right: 3px;
    top: 3px;
`;

const GroupRule = styled.div`
    width: 1px;
    height: 84px;
    margin-top: 1px;
    background: #b1b1b1;
    flex: none;
`;

const LargeButton = styled.div<{ $w: number; $ml: number; $off?: boolean }>`
    width: ${({ $w }) => $w}px;
    margin-left: ${({ $ml }) => $ml}px;
    display: flex;
    flex-direction: column;
    align-items: center;
    color: ${({ $off }) => ($off ? OFF : INK)};
    flex: none;
`;

const LargeIcon = styled.div`
    height: 38px;
    display: flex;
    align-items: center;
    justify-content: center;
`;

const LargeText = styled.div`
    height: 15px;
    display: flex;
    align-items: center;
    gap: 3px;
    white-space: nowrap;
    letter-spacing: -.1px;
`;

const ChevronLine = styled.div`
    height: 15px;
    display: flex;
    align-items: center;
`;

const ToolColumn = styled.div<{ $ml: number }>`
    margin-top: -1px;
    margin-left: ${({ $ml }) => $ml}px;
    flex: none;
`;

const ToolRow = styled.div<{ $off?: boolean }>`
    height: 23px;
    display: flex;
    align-items: center;
    gap: 3px;
    white-space: nowrap;
    letter-spacing: -.1px;
    color: ${({ $off }) => ($off ? OFF : INK)};
`;

const ToolIcon = styled.div`
    width: 17px;
    display: flex;
    justify-content: center;
    flex: none;
`;

const CopyChevron = styled.span`
    margin-left: 9px;
`;

const ReplaceChevron = styled.div`
    margin: 33px 0 0 15px;
`;

const FontBody = styled.div`
    padding: 8px 0 0 8px;
    display: flex;
    flex-direction: column;
    gap: 7px;
`;

const FontRow = styled.div`
    height: 23px;
    display: flex;
    align-items: center;
`;

const Combo = styled.div<{ $w: number }>`
    position: relative;
    width: ${({ $w }) => $w}px;
    height: 23px;
    margin-right: 3px;
    padding-left: 3px;
    line-height: 21px;
    font-size: 12px;
    color: #b5b5b5;
    background: #e6e6e6;
    border: 1px solid #c6c6c6;
`;

const ComboArrow = styled.span`
    position: absolute;
    right: 0;
    top: 0;
    bottom: 0;
    width: 13px;
    background: ${RIBBON};
    border-left: 1px solid #c6c6c6;
    &::after {
        content: '';
        position: absolute;
        left: 3px;
        top: 9px;
        border: 3px solid transparent;
        border-top: 3px solid #b5b5b5;
    }
`;

const GrowGlyph = styled.div`
    width: 24px;
    font-size: 14px;
    color: ${OFF};
    text-align: center;
    white-space: nowrap;
    sup { font-size: 8px; line-height: 0; }
`;

const SmallRule = styled.div<{ $ml: number; $mr: number }>`
    width: 1px;
    height: 21px;
    margin-left: ${({ $ml }) => $ml}px;
    margin-right: ${({ $mr }) => $mr}px;
    background: #c6c6c6;
    flex: none;
`;

const ClearSpot = styled.div`
    margin-left: 8px;
`;

interface GlyphProps {
    readonly $w: number;
    readonly $ml?: number;
    readonly $mr?: number;
    readonly $bold?: boolean;
    readonly $italic?: boolean;
    readonly $under?: boolean;
    readonly $strike?: boolean;
    readonly $shadow?: boolean;
    readonly $big?: boolean;
    readonly $mark?: boolean;
}

const FormatGlyph = styled.div<GlyphProps>`
    width: ${({ $w }) => $w}px;
    margin-left: ${({ $ml = 0 }) => $ml}px;
    margin-right: ${({ $mr = 0 }) => $mr}px;
    text-align: center;
    font-family: "Liberation Sans", sans-serif;
    font-size: ${({ $big }) => ($big ? 15 : 13)}px;
    font-weight: ${({ $bold }) => ($bold ? 700 : 400)};
    font-style: ${({ $italic }) => ($italic ? 'italic' : 'normal')};
    text-decoration: ${({ $under, $strike }) => ($under ? 'underline' : $strike ? 'line-through' : 'none')};
    text-shadow: ${({ $shadow }) => ($shadow ? '1px 1px 1px #bbb' : 'none')};
    border-bottom: ${({ $mark }) => ($mark ? '3px solid #e6e6e6' : 'none')};
    color: ${OFF};
    flex: none;
`;

const SpacingGlyph = styled.div`
    width: 24px;
    display: flex;
    flex-direction: column;
    align-items: center;
    font-family: "Liberation Sans", sans-serif;
    font-size: 13px;
    line-height: 12px;
    color: ${OFF};
    flex: none;
`;

const ParaBody = styled.div`
    width: 170px;
    padding: 6px 0 0 14px;
    display: flex;
    flex-direction: column;
    gap: 9px;
    flex: none;
`;

const ParaItem = styled.div<{ $w: number }>`
    width: ${({ $w }) => $w}px;
    display: flex;
    align-items: center;
    gap: 6px;
    flex: none;
`;

const Gallery = styled.div`
    width: 122px;
    height: 62px;
    margin: 3px 0 0 10px;
    padding: 2px 3px;
    display: grid;
    grid-template-columns: repeat(6, 1fr);
    align-items: center;
    justify-items: center;
    background: #fff;
    border: 1px solid #ababab;
    border-right: none;
    flex: none;
`;

const GalleryMore = styled.div`
    width: 24px;
    height: 62px;
    margin-top: 3px;
    padding-top: 25px;
    display: flex;
    justify-content: center;
    border: 1px solid #8c8c8c;
    flex: none;
`;

const AddInDot = styled.div`
    width: 10px;
    height: 10px;
    margin-bottom: 4px;
    border-radius: 50%;
    background: #ff9412;
    box-shadow: 0 0 3px #ffc27a;
`;

const CollapseSpot = styled.div`
    margin: 79px 0 0 50px;
`;

const Main = styled.main`
    height: 549px;
    display: flex;
    background: ${PANEL};
    flex: none;
`;

const ThumbPanel = styled.div`
    width: 189px;
    padding-top: 19px;
    display: flex;
    flex-direction: column;
    gap: 20px;
    overflow: hidden;
    flex: none;
`;

const ThumbRow = styled.div`
    display: flex;
    flex: none;
`;

const ThumbNumber = styled.div<{ $active?: boolean }>`
    width: 35px;
    margin-top: -4px;
    padding-left: 12px;
    font-size: 16px;
    line-height: 18px;
    color: ${({ $active }) => ($active ? RED : '#555')};
    flex: none;
`;

const ThumbCard = styled.div<{ $active?: boolean }>`
    width: 134px;
    height: 101px;
    background: #fff;
    border: 1px solid #c6c6c6;
    outline: ${({ $active }) => ($active ? `3px solid ${RED}` : 'none')};
    flex: none;
`;

const CoverSlide = styled.div`
    padding: 31px 12px 0;
    text-align: center;
`;

const CoverTitle = styled.div`
    font-size: 7.2px;
    line-height: 10px;
    color: #333;
`;

const CoverSub = styled.div`
    margin-top: 5px;
    font-size: 4.8px;
    color: #8f9a86;
`;

const ThumbContent = styled.div`
    padding: 9px 0 0 11px;
`;

const ThumbHeading = styled.div`
    font-size: 4px;
    line-height: 5px;
    color: #555;
    letter-spacing: .1px;
`;

const ThumbTitle = styled.div`
    margin: 4px 0 0 2px;
    font-size: 3.5px;
    line-height: 5px;
    color: #666;
`;

const ThumbText = styled.div`
    margin-left: 2px;
    font-size: 2.7px;
    line-height: 3px;
    color: #888;
`;

const ThumbBar = styled.div`
    width: 94px;
    height: 2px;
    margin: 27px 0 0 2px;
    background: #4a7ab5;
`;

const ScrollButton = styled.div`
    width: 15px;
    height: 15px;
    background: ${RIBBON};
    border: 1px solid #8c8c8c;
    display: flex;
    align-items: center;
    justify-content: center;
    flex: none;
`;

const LeftScroll = styled.div`
    width: 15px;
    height: 544px;
    margin-top: 3px;
    display: flex;
    flex-direction: column;
    background: ${RIBBON};
    flex: none;
`;

const LeftThumb = styled.div`
    height: 444px;
    margin-bottom: auto;
    background: #fff;
    border: 1px solid #8c8c8c;
    border-top-width: 2px;
`;

const Editor = styled.div`
    flex: 1;
    min-width: 0;
    margin-left: 4px;
    display: flex;
    flex-direction: column;
    border-left: 1px solid #cfcfcf;
`;

const EditorTop = styled.div`
    height: 515px;
    display: flex;
    flex: none;
`;

const Canvas = styled.div`
    flex: 1;
    padding: 12px 0 0 245px;
    display: flex;
`;

const Slide = styled.div`
    position: relative;
    width: 652px;
    height: 489px;
    background: #fff;
    border: 1px solid #c6c6c6;
    flex: none;
`;

const TitleBox = styled.div`
    position: absolute;
    left: 30px;
    top: 16px;
    width: 590px;
    height: 85px;
    border: 2px dashed #a6a6a6;
    display: flex;
    align-items: center;
    justify-content: center;
    font-family: ${SLIDE_FONT};
    font-variant-ligatures: none;
    font-size: 36px;
    color: #111;
`;

const SlideLabel = styled.div<{ $x: number; $y: number }>`
    position: absolute;
    left: ${({ $x }) => $x - 1}px;
    top: ${({ $y }) => $y - 1}px;
    font-family: ${SLIDE_FONT};
    font-size: 13.5px;
    line-height: 16px;
    color: #111;
`;

const Stem = styled.div<{ $x: number; $top: number; $h: number }>`
    position: absolute;
    left: ${({ $x }) => $x - 1}px;
    top: ${({ $top }) => $top - 1}px;
    width: 2px;
    height: ${({ $h }) => $h}px;
    background: #5b87c0;
`;

const Spine = styled.div`
    position: absolute;
    left: 122px;
    top: 272px;
    width: 431px;
    height: 3px;
    background: #6e9ad6;
    box-shadow: 0 1px 2px rgba(0, 0, 0, .35);
`;

const Node = styled.div<{ $x: number }>`
    position: absolute;
    left: ${({ $x }) => $x - 13}px;
    top: 262px;
    width: 25px;
    height: 22px;
    border-radius: 50%;
    background: linear-gradient(#92bdf5, #5f96e2 70%, #4f86d4);
    box-shadow: 0 1px 2px rgba(0, 0, 0, .4);
`;

const PointerSpot = styled.div`
    position: absolute;
    left: 425px;
    top: 404px;
`;

const RightScroll = styled.div`
    width: 15px;
    height: 512px;
    margin-top: 2px;
    display: flex;
    flex-direction: column;
    background: ${RIBBON};
    flex: none;
`;

const RightThumb = styled.div`
    height: 85px;
    margin: 171px 0 auto;
    background: #fff;
    border: 1px solid #8c8c8c;
`;

const SlideNav = styled.div`
    height: 54px;
    padding: 4px 0 0 3px;
    display: flex;
    flex-direction: column;
    gap: 4px;
`;

const NotesBar = styled.div`
    height: 34px;
    margin-left: 2px;
    padding: 0 0 3px 10px;
    display: flex;
    align-items: center;
    font-size: 14px;
    color: #767676;
    border-top: 1px solid #c6c6c6;
    flex: none;
`;

const Status = styled.footer`
    height: 23px;
    padding-bottom: 1px;
    display: flex;
    align-items: stretch;
    background: ${RIBBON};
    border-top: 1px solid #c6c6c6;
    border-bottom: 1px solid #26303a;
    font-size: 11px;
    flex: none;
`;

const SlideCount = styled.div`
    width: 88px;
    padding-left: 12px;
    display: flex;
    align-items: center;
    white-space: nowrap;
`;

const ProofSpot = styled.div`
    width: 31px;
    display: flex;
    align-items: center;
`;

const AccessSpot = styled.div`
    width: 19px;
    display: flex;
    align-items: center;
`;

const AccessText = styled.div`
    display: flex;
    align-items: center;
    font-weight: 600;
    white-space: nowrap;
    letter-spacing: -.1px;
`;

const StatusRight = styled.div`
    margin-left: auto;
    padding-right: 6px;
    display: flex;
    align-items: center;
`;

const StatusTool = styled.div<{ $mr: number }>`
    margin-right: ${({ $mr }) => $mr}px;
    display: flex;
    align-items: center;
    gap: 3px;
    font-size: 10.5px;
    white-space: nowrap;
`;

const ViewButton = styled.div<{ $active?: boolean }>`
    width: 40px;
    height: 20px;
    display: flex;
    align-items: center;
    justify-content: center;
    background: ${({ $active }) => ($active ? '#c6c6c6' : 'transparent')};
`;

const ZoomSign = styled.div`
    width: 18px;
    text-align: center;
    font-size: 14px;
    color: #555;
    &:first-of-type { margin-left: 2px; }
`;

const ZoomTrack = styled.div`
    position: relative;
    width: 100px;
    height: 1px;
    background: #555;
`;

const ZoomThumb = styled.div`
    position: absolute;
    left: 31px;
    top: -5px;
    width: 5px;
    height: 11px;
    background: #555;
`;

const ZoomTick = styled.div`
    position: absolute;
    left: 50px;
    top: -2px;
    width: 1px;
    height: 5px;
    background: #555;
`;

const ZoomValue = styled.div`
    width: 36px;
    margin-right: 6px;
    text-align: center;
`;

export default App;
